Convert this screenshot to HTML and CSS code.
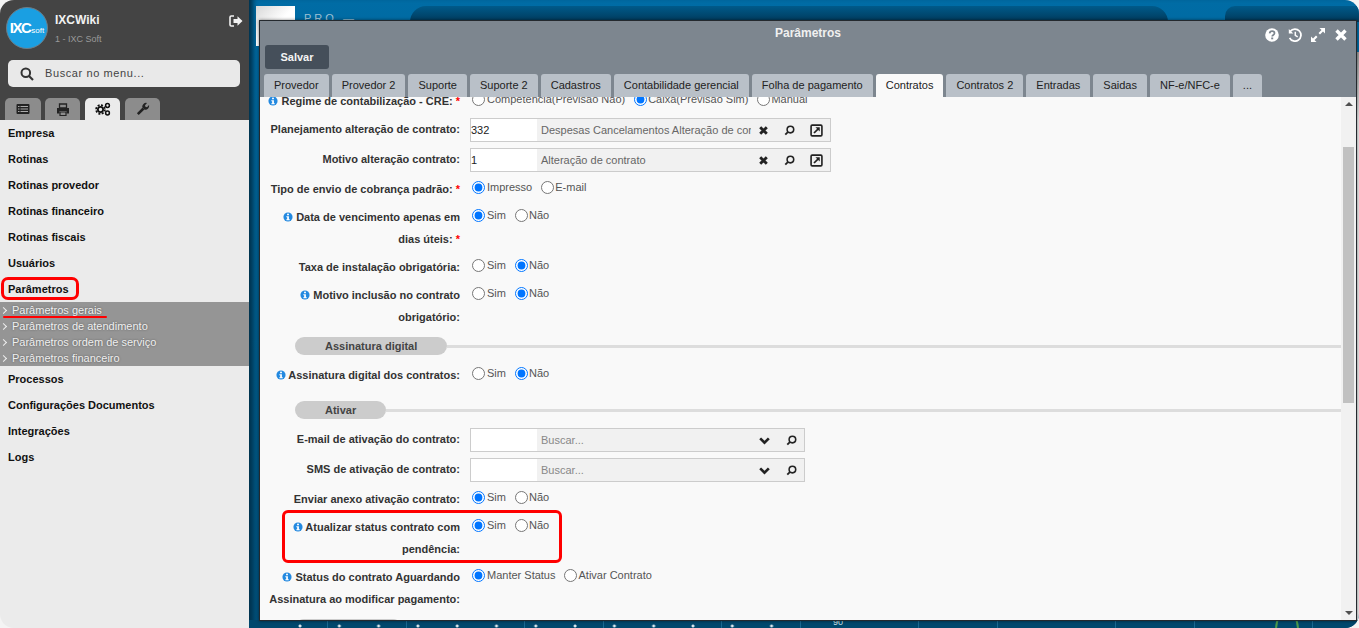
FILE: index.html
```html
<!DOCTYPE html>
<html lang="pt-BR">
<head>
<meta charset="utf-8">
<title>Parâmetros</title>
<link rel="stylesheet" href="styles.css">
</head>
<body>
<svg class="defs" width="0" height="0" aria-hidden="true">
  <symbol id="i-info" viewBox="0 0 12 12"><circle cx="6" cy="6" r="5.5" fill="#2389e0"/><rect x="4.9" y="2" width="2.2" height="1.9" fill="#fff"/><path d="M4 5h3.1v3.6h1V10H4V8.6h1V6.3H4z" fill="#fff"/></symbol>
  <symbol id="i-x" viewBox="0 0 10 10"><path d="M2 2l6 6M8 2l-6 6" stroke="#222" stroke-width="2.6" fill="none"/></symbol>
  <symbol id="i-search" viewBox="0 0 12 12"><circle cx="7" cy="5" r="3.6" fill="none" stroke="#222" stroke-width="1.7"/><path d="M4.2 7.8L1.4 10.6" stroke="#222" stroke-width="2" fill="none"/></symbol>
  <symbol id="i-ext" viewBox="0 0 12 12"><rect x="1" y="1" width="10" height="10" rx="1" fill="none" stroke="#222" stroke-width="1.5"/><path d="M3.7 8.3L7.8 4.2" stroke="#222" stroke-width="1.6" fill="none"/><path d="M5 3h4v4z" fill="#222"/></symbol>
  <symbol id="i-chev" viewBox="0 0 12 10"><path d="M2 3l4 4 4-4" stroke="#222" stroke-width="2.4" fill="none"/></symbol>
</svg>
<div class="screen">
  <aside class="sidebar">
    <header class="side-head">
      <div class="brand">
        <div class="logo"><span class="logo-ixc">IXC</span><span class="logo-soft">soft</span></div>
        <div class="brand-text">
          <div class="brand-name">IXCWiki</div>
          <div class="brand-sub">1 - IXC Soft</div>
        </div>
        <svg class="logout" viewBox="0 0 14 12" width="14" height="12"><path d="M5 1H2.200C1.500 1 1 1.500 1 2.200v7.600C1 10.500 1.500 11 2.200 11H5" fill="none" stroke="#f2f2f2" stroke-width="1.600"/><path d="M4.500 4h4V1.300L13.500 6l-5 4.700V8h-4z" fill="#f2f2f2"/></svg>
      </div>
      <div class="side-search">
        <svg viewBox="0 0 14 14" width="14" height="14"><circle cx="5.800" cy="5.800" r="4.300" fill="none" stroke="#333" stroke-width="2"/><path d="M9 9l4 4" stroke="#333" stroke-width="2.200"/></svg>
        <span>Buscar no menu...</span>
      </div>
      <nav class="side-tabs">
        <div class="side-tab t1"><svg viewBox="0 0 14 12" width="14" height="12"><rect x=".5" y="1" width="13" height="10" rx="1" fill="#222"/><path d="M2 3.500h1.500M2 6h1.500M2 8.500h1.500M4.500 3.500h7.500M4.500 6h7.500M4.500 8.500h7.500" stroke="#aaa" stroke-width="1"/></svg></div>
        <div class="side-tab t2"><svg viewBox="0 0 14 13" width="14" height="13"><path d="M3.500 5V1h7v4z" fill="none" stroke="#222" stroke-width="1.300"/><path d="M1 5h12v5.500h-2.500V8h-7v2.500H1z" fill="#222"/><path d="M4 9h6v3.500H4z" fill="none" stroke="#222" stroke-width="1.200"/></svg></div>
        <div class="side-tab t3 active"><svg viewBox="0 0 16 14" width="16" height="14"><circle cx="5.500" cy="7.500" r="2.600" fill="none" stroke="#111" stroke-width="1.800"/><circle cx="5.500" cy="7.500" r="4.400" fill="none" stroke="#111" stroke-width="1.700" stroke-dasharray="2 1.450"/><circle cx="12.500" cy="3.500" r="1.900" fill="none" stroke="#111" stroke-width="1.500"/><circle cx="12.500" cy="11" r="1.900" fill="none" stroke="#111" stroke-width="1.500"/></svg></div>
        <div class="side-tab t4"><svg viewBox="0 0 14 14" width="14" height="14"><path d="M1.800 12.200L7.500 6.500" stroke="#222" stroke-width="2.600"/><path d="M6.300 5.300A3.800 3.800 0 0 1 11 1l-2 2.200.4 1.600 1.600.4L13 3a3.800 3.800 0 0 1-4.300 4.700z" fill="#222"/></svg></div>
      </nav>
    </header>
    <ul class="menu">
      <li class="menu-item">Empresa</li>
      <li class="menu-item">Rotinas</li>
      <li class="menu-item">Rotinas provedor</li>
      <li class="menu-item">Rotinas financeiro</li>
      <li class="menu-item">Rotinas fiscais</li>
      <li class="menu-item">Usuários</li>
      <li class="menu-item marked">Parâmetros</li>
      <li class="submenu">
        <div class="sub-item underlined"><span class="caret"></span>Parâmetros gerais</div>
        <div class="sub-item"><span class="caret"></span>Parâmetros de atendimento</div>
        <div class="sub-item"><span class="caret"></span>Parâmetros ordem de serviço</div>
        <div class="sub-item"><span class="caret"></span>Parâmetros financeiro</div>
      </li>
      <li class="menu-item">Processos</li>
      <li class="menu-item">Configurações Documentos</li>
      <li class="menu-item">Integrações</li>
      <li class="menu-item">Logs</li>
    </ul>
  </aside>

  <main class="desktop">
    <div class="bg-tile"></div>
    <div class="bg-pro">PRO —</div>
    <div class="bg-panel one"></div>
    <div class="bg-panel two"></div>
    <div class="bg-edge"></div>
    <div class="bg-dots"></div>
    <div class="bg-points"></div>
    <div class="bg-ninety">90</div>
    <div class="bg-arc"></div>

    <section class="window">
      <div class="win-head">
        <div class="win-title">Parâmetros</div>
        <div class="win-actions">
          <svg viewBox="0 0 14 14" width="14" height="14"><circle cx="7" cy="7" r="6.800" fill="#fff"/><path d="M4.600 5.400C4.800 3.900 5.800 3.200 7.100 3.200c1.400 0 2.400.8 2.400 2 0 1.800-2.300 1.700-2.300 3.300" fill="none" stroke="#7d868f" stroke-width="1.700"/><rect x="6.200" y="9.500" width="2" height="1.800" fill="#7d868f"/></svg>
          <svg viewBox="0 0 14 14" width="14" height="14"><path d="M2.300 3.300A6 6 0 1 1 1.600 9.800" fill="none" stroke="#fff" stroke-width="1.800"/><path d="M.8 1v4.500h4.500z" fill="#fff"/><path d="M7.300 3.800v3.600l2.400 1.400" fill="none" stroke="#fff" stroke-width="1.500"/></svg>
          <svg viewBox="0 0 14 14" width="14" height="14"><path d="M8.500 0H14v5.500l-2-2-3 3-1.500-1.500 3-3zM5.500 14H0V8.500l2 2 3-3L6.500 9l-3 3z" fill="#fff"/></svg>
          <svg viewBox="0 0 14 14" width="14" height="14"><path d="M2.500 2.500l9 9M11.500 2.500l-9 9" stroke="#fff" stroke-width="3.400"/></svg>
        </div>
        <div class="win-toolbar"><button class="btn-save" type="button">Salvar</button></div>
        <div class="tabs">
          <div class="tab">Provedor</div>
          <div class="tab">Provedor 2</div>
          <div class="tab">Suporte</div>
          <div class="tab">Suporte 2</div>
          <div class="tab">Cadastros</div>
          <div class="tab">Contabilidade gerencial</div>
          <div class="tab">Folha de pagamento</div>
          <div class="tab active">Contratos</div>
          <div class="tab">Contratos 2</div>
          <div class="tab">Entradas</div>
          <div class="tab">Saidas</div>
          <div class="tab">NF-e/NFC-e</div>
          <div class="tab">...</div>
        </div>
      </div>

      <div class="win-body">
        <form class="form">
          <div class="row first">
            <div class="lbl"><svg class="info"><use href="#i-info"/></svg> Regime de contabilização - CRE: <b class="req">*</b></div>
            <div class="opts">
              <label class="opt"><input type="radio" name="r1">Competência(Previsão Não)</label>
              <label class="opt"><input type="radio" name="r1" checked>Caixa(Previsão Sim)</label>
              <label class="opt"><input type="radio" name="r1">Manual</label>
            </div>
          </div>
          <div class="row input-row">
            <div class="lbl">Planejamento alteração de contrato:</div>
            <div class="combo wide">
              <div class="combo-code">332</div>
              <div class="combo-desc">Despesas Cancelamentos Alteração de contrato</div>
              <div class="combo-btns"><svg class="ic-x"><use href="#i-x"/></svg><svg class="ic-s"><use href="#i-search"/></svg><svg class="ic-e"><use href="#i-ext"/></svg></div>
            </div>
          </div>
          <div class="row input-row">
            <div class="lbl">Motivo alteração contrato:</div>
            <div class="combo wide">
              <div class="combo-code">1</div>
              <div class="combo-desc">Alteração de contrato</div>
              <div class="combo-btns"><svg class="ic-x"><use href="#i-x"/></svg><svg class="ic-s"><use href="#i-search"/></svg><svg class="ic-e"><use href="#i-ext"/></svg></div>
            </div>
          </div>
          <div class="row tight">
            <div class="lbl">Tipo de envio de cobrança padrão: <b class="req">*</b></div>
            <div class="opts">
              <label class="opt"><input type="radio" name="r2" checked>Impresso</label>
              <label class="opt"><input type="radio" name="r2">E-mail</label>
            </div>
          </div>
          <div class="row">
            <div class="lbl"><svg class="info"><use href="#i-info"/></svg> Data de vencimento apenas em dias úteis: <b class="req">*</b></div>
            <div class="opts">
              <label class="opt"><input type="radio" name="r3" checked>Sim</label>
              <label class="opt"><input type="radio" name="r3">Não</label>
            </div>
          </div>
          <div class="row">
            <div class="lbl">Taxa de instalação obrigatória:</div>
            <div class="opts">
              <label class="opt"><input type="radio" name="r4">Sim</label>
              <label class="opt"><input type="radio" name="r4" checked>Não</label>
            </div>
          </div>
          <div class="row">
            <div class="lbl"><svg class="info"><use href="#i-info"/></svg> Motivo inclusão no contrato obrigatório:</div>
            <div class="opts">
              <label class="opt"><input type="radio" name="r5">Sim</label>
              <label class="opt"><input type="radio" name="r5" checked>Não</label>
            </div>
          </div>
          <div class="section"><span class="pill">Assinatura digital</span><span class="rule"></span></div>
          <div class="row">
            <div class="lbl"><svg class="info"><use href="#i-info"/></svg> Assinatura digital dos contratos:</div>
            <div class="opts">
              <label class="opt"><input type="radio" name="r6">Sim</label>
              <label class="opt"><input type="radio" name="r6" checked>Não</label>
            </div>
          </div>
          <div class="section second"><span class="pill">Ativar</span><span class="rule"></span></div>
          <div class="row input-row">
            <div class="lbl">E-mail de ativação do contrato:</div>
            <div class="combo narrow">
              <div class="combo-code"></div>
              <div class="combo-desc ph">Buscar...</div>
              <div class="combo-btns"><svg class="ic-c"><use href="#i-chev"/></svg><svg class="ic-s"><use href="#i-search"/></svg></div>
            </div>
          </div>
          <div class="row input-row">
            <div class="lbl">SMS de ativação de contrato:</div>
            <div class="combo narrow">
              <div class="combo-code"></div>
              <div class="combo-desc ph">Buscar...</div>
              <div class="combo-btns"><svg class="ic-c"><use href="#i-chev"/></svg><svg class="ic-s"><use href="#i-search"/></svg></div>
            </div>
          </div>
          <div class="row tight">
            <div class="lbl">Enviar anexo ativação contrato:</div>
            <div class="opts">
              <label class="opt"><input type="radio" name="r7" checked>Sim</label>
              <label class="opt"><input type="radio" name="r7">Não</label>
            </div>
          </div>
          <div class="row boxed">
            <div class="lbl"><svg class="info"><use href="#i-info"/></svg> Atualizar status contrato com pendência:</div>
            <div class="opts">
              <label class="opt"><input type="radio" name="r8" checked>Sim</label>
              <label class="opt"><input type="radio" name="r8">Não</label>
            </div>
          </div>
          <div class="row">
            <div class="lbl"><svg class="info"><use href="#i-info"/></svg> Status do contrato Aguardando Assinatura ao modificar pagamento:</div>
            <div class="opts">
              <label class="opt"><input type="radio" name="r9" checked>Manter Status</label>
              <label class="opt"><input type="radio" name="r9">Ativar Contrato</label>
            </div>
          </div>
          <div class="section last"><span class="pill blank"></span></div>
        </form>
        <div class="scrollbar">
          <span class="arrow up"></span>
          <span class="thumb"></span>
          <span class="arrow down"></span>
        </div>
      </div>
    </section>
  </main>
</div>
</body>
</html>
```
FILE: styles.css
```css
*, *::before, *::after { box-sizing: border-box; }
html, body { margin: 0; height: 100%; overflow: hidden; background: #f4f4f4; }
body { font: 11px/1.2 "Liberation Sans", Arial, sans-serif; color: #333; }
.defs { position: absolute; }

.screen { display: flex; height: 628px; border-radius: 14px; overflow: hidden; }

/* Sidebar */
.sidebar { width: 249px; flex: none; background: #ebebeb; display: flex; flex-direction: column; }
.side-head { background: #444; height: 120px; display: flex; flex-direction: column; }
.brand { display: flex; align-items: flex-start; height: 60px; padding: 7px 6px 0; }
.logo { width: 42px; height: 42px; flex: none; border-radius: 50%; background: #1a9fe2; border: 1px solid #6e7d86; display: flex; align-items: baseline; justify-content: center; padding-top: 11px; color: #fff; }
.logo-ixc { font-weight: bold; font-size: 15px; letter-spacing: -1.500px; }
.logo-soft { font-size: 8px; margin-left: 1px; }
.brand-text { flex: 1; padding: 6px 0 0 7px; }
.brand-name { color: #f2f2f2; font-size: 12px; font-weight: bold; line-height: 14px; }
.brand-sub { color: #9a9a9a; font-size: 9px; line-height: 12px; margin-top: 6px; }
.logout { margin: 8px 0 0; }
.side-search { margin: 0 9px 0 8px; height: 27px; border-radius: 5px; background: #e9e9e9; display: flex; align-items: center; padding-left: 12px; color: #444; letter-spacing: .6px; gap: 11px; }
.side-tabs { display: flex; align-items: flex-end; margin-top: auto; padding-left: 5px; gap: 4px; }
.side-tab { width: 35px; height: 22px; border-radius: 5px 5px 0 0; background: #8c8c8c; display: flex; align-items: center; justify-content: center; }
.side-tab.t1 { width: 36px; }
.side-tab.t3, .side-tab.t4 { margin-left: 1px; }
.side-tab.active { background: #ebebeb; }

.menu { list-style: none; margin: 0; padding: 0; }
.menu-item { height: 26px; line-height: 26px; padding-left: 8px; font-weight: bold; color: #111; position: relative; }
.menu-item.marked::after { content: ""; position: absolute; left: 1px; top: 1px; width: 78px; height: 23px; border: 3px solid #f00; border-radius: 7px; }
.submenu { background: #959595; }
.sub-item { height: 16px; line-height: 16px; color: #f0f0f0; display: flex; position: relative; text-shadow: 0 0 2px #555; }
.caret { width: 12px; flex: none; position: relative; }
.caret::before { content: ""; position: absolute; left: 1px; top: 6px; width: 5px; height: 5px; border-top: 1px solid #eee; border-right: 1px solid #eee; transform: rotate(45deg); }
.sub-item.underlined::after { content: ""; position: absolute; left: 3px; top: 14px; width: 104px; height: 2px; background: #f00; border-radius: 1px; }

/* Desktop behind the window */
.desktop { flex: 1; position: relative; background: linear-gradient(#006ca5, #005a88 60%, #00507a); box-shadow: inset 7px 0 5px -3px #00324d; overflow: hidden; }
.bg-tile { position: absolute; left: 7px; top: 6px; width: 39px; height: 40px; background: linear-gradient(135deg, #d8d8d8, #fff 50%); }
.bg-pro { position: absolute; left: 55px; top: 12px; color: #9fc1d4; font-size: 11px; letter-spacing: 3px; }
.bg-panel { position: absolute; top: 6px; height: 16px; background: linear-gradient(#005a8a, #00395a); }
.bg-panel.one { left: 161px; width: 758px; border-radius: 30px 30px 0 0; }
.bg-panel.two { left: 976px; right: 0; border-radius: 10px 0 0 0; }
.bg-edge { position: absolute; right: 0; top: 52px; bottom: 8px; width: 2px; background: linear-gradient(#999, #e8e8e8 12%); }
.bg-dots { position: absolute; left: 0; right: 0; bottom: 0; height: 8px; background: repeating-linear-gradient(90deg, transparent 0 39px, #1b6a92 39px 39.400px), #00486d; }
.bg-points { position: absolute; left: 49px; top: 622px; width: 495px; height: 6px; background: radial-gradient(circle at 2px 4px, #dbe8ee 1.200px, transparent 1.800px) 0 0 / 39.300px 6px repeat-x; }
.bg-ninety { position: absolute; left: 584px; top: 617px; color: #cfe0e8; font-size: 9px; }
.bg-arc { position: absolute; left: 1026px; top: 610px; width: 24px; height: 40px; border: 2px solid #4c9a4c; border-radius: 50%; }

/* Window */
.window { position: absolute; left: 10px; top: 20px; width: 1098px; height: 601px; border: 1px solid #24292e; background: #f9f9f9; display: flex; flex-direction: column; overflow: hidden; box-shadow: 0 0 3px rgba(0,0,0,.5); }
.win-head { background: #7d868f; position: relative; flex: none; height: 76px; padding: 24px 0 0 5px; }
.win-title { position: absolute; left: 0; right: 0; top: 5px; text-align: center; color: #f0f0f0; font-size: 12px; font-weight: bold; line-height: 15px; }
.win-actions { position: absolute; right: 8px; top: 7px; display: flex; gap: 9px; }
.win-toolbar { height: 25px; }
.btn-save { width: 64px; height: 24px; border: 0; border-radius: 3px; background: #454f5a; color: #f4f4f4; font: bold 11px "Liberation Sans", Arial, sans-serif; padding: 0; display: block; }
.tabs { display: flex; gap: 3px; margin: 4px 0 0 -1px; }
.tab { height: 23px; line-height: 22px; padding: 0 10px; background: #b9c0c8; color: #222; border-radius: 3px 3px 0 0; }
.tab.active { background: #f9f9f9; }

.win-body { flex: 1; display: flex; min-height: 0; overflow: hidden; }
.form { flex: 1; min-width: 0; margin-top: -10px; padding-left: 1px; }
.row { display: grid; grid-template-columns: 199px 1fr; column-gap: 10px; padding: 3px 0; min-height: 28px; position: relative; }
.row.tight { margin-top: -1px; }
.lbl { text-align: right; font-weight: bold; line-height: 22px; color: #333; padding-top: 1px; margin-bottom: -1px; }
.row.first .lbl, .input-row .lbl { padding-top: 0; margin-bottom: 0; }
.row.first .opts { margin-top: 1px; }
.req { color: #f00; }
.info { width: 10px; height: 10px; vertical-align: -1px; }
.opts { display: flex; gap: 6px; line-height: 16px; color: #555; height: 16px; margin-top: 2px; }
.opt { display: flex; align-items: center; gap: 2px; }
.opt input { margin: 0 0 0 2px; width: 13px; height: 13px; flex: none; }
.opt + .opt input { margin: 0 -1px 0 3px; }
.row.boxed::after { content: ""; position: absolute; left: 21px; top: -2px; width: 280px; height: 53px; border: 3px solid #f00; border-radius: 6px; pointer-events: none; }

.input-row { min-height: 30px; }
.combo { display: flex; height: 24px; border: 1px solid #ccc; background: #f1f1f1; color: #666; overflow: hidden; }
.combo.wide { width: 361px; }
.combo.narrow { width: 335px; }
.combo-code { width: 66px; flex: none; background: #fff; color: #222; line-height: 22px; }
.combo-desc { flex: 1; min-width: 0; padding-left: 4px; line-height: 22px; white-space: nowrap; overflow: hidden; }
.combo-desc.ph { color: #888; }
.combo-btns { display: flex; align-items: center; flex: none; padding: 0 7px; gap: 15px; }
.combo-btns svg { width: 11px; height: 11px; display: block; }
.combo-btns .ic-e { width: 13px; height: 13px; }
.combo-btns .ic-c { width: 13px; }

.section { display: flex; align-items: center; margin: 7px 0 5px 34px; height: 18px; }
.section.second { margin-top: 13px; margin-bottom: 6px; }
.section.last { margin-top: 7px; }
.pill { background: #ccc; border-radius: 9px; height: 18px; line-height: 18px; padding: 0 30px; font-weight: bold; color: #444; flex: none; }
.pill.blank { width: 107px; }
.rule { flex: 1; height: 3px; background: #ddd; }

.scrollbar { width: 15px; flex: none; background: #f1f1f1; display: flex; flex-direction: column; align-items: center; }
.arrow { width: 0; height: 0; border-left: 4px solid transparent; border-right: 4px solid transparent; flex: none; }
.arrow.up { border-bottom: 4px solid #505050; margin-top: 5px; }
.arrow.down { border-top: 4px solid #505050; margin-top: auto; margin-bottom: 5px; }
.thumb { width: 11px; height: 256px; background: #c1c1c1; margin-top: 41px; }
```
